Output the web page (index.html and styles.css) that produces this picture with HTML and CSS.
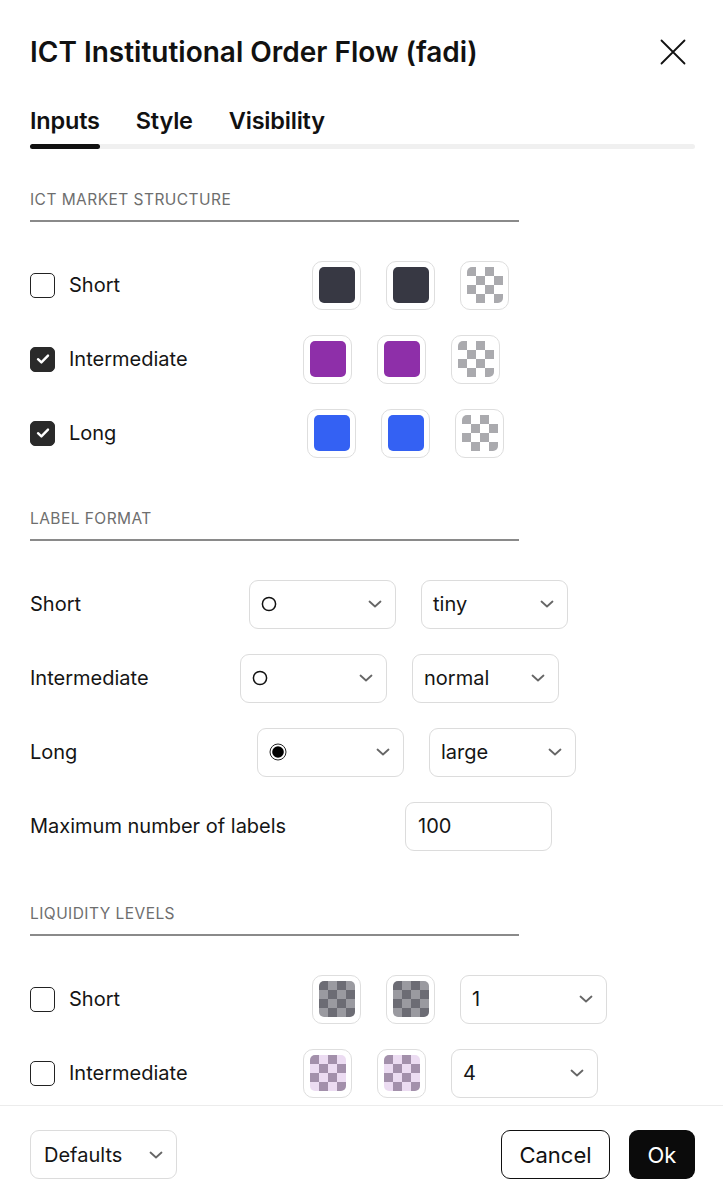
FILE: index.html
```html
<!DOCTYPE html>
<html lang="en">
<head>
<meta charset="utf-8">
<title>ICT Institutional Order Flow (fadi)</title>
<link rel="stylesheet" href="styles.css">
</head>
<body>
<div class="dialog">
  <div class="main">
    <header class="header">
      <h1 class="title">ICT Institutional Order Flow (fadi)</h1>
      <button class="close" aria-label="Close">
        <svg width="26" height="26" viewBox="0 0 26 26"><path d="M1.5 1.5 L24.5 24.5 M24.5 1.5 L1.5 24.5" stroke="#111" stroke-width="1.8" fill="none" stroke-linecap="round"/></svg>
      </button>
    </header>

    <nav class="tabs">
      <div class="tab-list">
        <span class="tab tab--active">Inputs</span>
        <span class="tab">Style</span>
        <span class="tab">Visibility</span>
      </div>
      <div class="tab-track"><div class="tab-indicator"></div></div>
    </nav>

    <div class="content">
      <section class="section">
        <h2 class="section-title">ICT MARKET STRUCTURE</h2>
        <div class="rows">
          <div class="row">
            <label class="lbl lbl-w282"><span class="check"></span>Short</label>
            <div class="controls">
              <span class="swatch"><span class="chip chip--dark"></span></span>
              <span class="swatch"><span class="chip chip--dark"></span></span>
              <span class="swatch"><span class="chip chip--clear"></span></span>
            </div>
          </div>
          <div class="row">
            <label class="lbl lbl-w273"><span class="check check--on"><svg width="14" height="12" viewBox="0 0 14 12"><path d="M2 6.2 L5.4 9.4 L12 2.6" stroke="#fff" stroke-width="2.4" fill="none" stroke-linecap="round" stroke-linejoin="round"/></svg></span>Intermediate</label>
            <div class="controls">
              <span class="swatch"><span class="chip chip--purple"></span></span>
              <span class="swatch"><span class="chip chip--purple"></span></span>
              <span class="swatch"><span class="chip chip--clear"></span></span>
            </div>
          </div>
          <div class="row">
            <label class="lbl lbl-w277"><span class="check check--on"><svg width="14" height="12" viewBox="0 0 14 12"><path d="M2 6.2 L5.4 9.4 L12 2.6" stroke="#fff" stroke-width="2.4" fill="none" stroke-linecap="round" stroke-linejoin="round"/></svg></span>Long</label>
            <div class="controls">
              <span class="swatch"><span class="chip chip--blue"></span></span>
              <span class="swatch"><span class="chip chip--blue"></span></span>
              <span class="swatch"><span class="chip chip--clear"></span></span>
            </div>
          </div>
        </div>
      </section>

      <section class="section section--gap">
        <h2 class="section-title">LABEL FORMAT</h2>
        <div class="rows">
          <div class="row">
            <span class="lbl lbl-w219">Short</span>
            <div class="controls">
              <span class="select"><span class="select-val"><svg width="16" height="16" viewBox="0 0 16 16"><circle cx="8" cy="8" r="6.6" stroke="#111" stroke-width="1.5" fill="none"/></svg></span><svg class="chev" width="14" height="8" viewBox="0 0 14 8"><path d="M1.5 1.5 L7 6.5 L12.5 1.5" stroke="#666" stroke-width="1.8" fill="none" stroke-linecap="round" stroke-linejoin="round"/></svg></span>
              <span class="select"><span class="select-val">tiny</span><svg class="chev" width="14" height="8" viewBox="0 0 14 8"><path d="M1.5 1.5 L7 6.5 L12.5 1.5" stroke="#666" stroke-width="1.8" fill="none" stroke-linecap="round" stroke-linejoin="round"/></svg></span>
            </div>
          </div>
          <div class="row">
            <span class="lbl lbl-w210">Intermediate</span>
            <div class="controls">
              <span class="select"><span class="select-val"><svg width="16" height="16" viewBox="0 0 16 16"><circle cx="8" cy="8" r="6.6" stroke="#111" stroke-width="1.5" fill="none"/></svg></span><svg class="chev" width="14" height="8" viewBox="0 0 14 8"><path d="M1.5 1.5 L7 6.5 L12.5 1.5" stroke="#666" stroke-width="1.8" fill="none" stroke-linecap="round" stroke-linejoin="round"/></svg></span>
              <span class="select"><span class="select-val">normal</span><svg class="chev" width="14" height="8" viewBox="0 0 14 8"><path d="M1.5 1.5 L7 6.5 L12.5 1.5" stroke="#666" stroke-width="1.8" fill="none" stroke-linecap="round" stroke-linejoin="round"/></svg></span>
            </div>
          </div>
          <div class="row">
            <span class="lbl lbl-w227">Long</span>
            <div class="controls">
              <span class="select"><span class="select-val"><svg width="18" height="18" viewBox="0 0 18 18"><circle cx="9" cy="9" r="8" stroke="#222" stroke-width="1" fill="#fff"/><circle cx="9" cy="9" r="5.8" fill="#000"/></svg></span><svg class="chev" width="14" height="8" viewBox="0 0 14 8"><path d="M1.5 1.5 L7 6.5 L12.5 1.5" stroke="#666" stroke-width="1.8" fill="none" stroke-linecap="round" stroke-linejoin="round"/></svg></span>
              <span class="select"><span class="select-val">large</span><svg class="chev" width="14" height="8" viewBox="0 0 14 8"><path d="M1.5 1.5 L7 6.5 L12.5 1.5" stroke="#666" stroke-width="1.8" fill="none" stroke-linecap="round" stroke-linejoin="round"/></svg></span>
            </div>
          </div>
          <div class="row">
            <span class="lbl lbl-w375">Maximum number of labels</span>
            <div class="controls">
              <span class="input">100</span>
            </div>
          </div>
        </div>
      </section>

      <section class="section section--gap-lg">
        <h2 class="section-title">LIQUIDITY LEVELS</h2>
        <div class="rows">
          <div class="row">
            <label class="lbl lbl-w282"><span class="check"></span>Short</label>
            <div class="controls">
              <span class="swatch"><span class="chip chip--grey"></span></span>
              <span class="swatch"><span class="chip chip--grey"></span></span>
              <span class="select"><span class="select-val">1</span><svg class="chev" width="14" height="8" viewBox="0 0 14 8"><path d="M1.5 1.5 L7 6.5 L12.5 1.5" stroke="#666" stroke-width="1.8" fill="none" stroke-linecap="round" stroke-linejoin="round"/></svg></span>
            </div>
          </div>
          <div class="row">
            <label class="lbl lbl-w273"><span class="check"></span>Intermediate</label>
            <div class="controls">
              <span class="swatch"><span class="chip chip--lilac"></span></span>
              <span class="swatch"><span class="chip chip--lilac"></span></span>
              <span class="select"><span class="select-val">4</span><svg class="chev" width="14" height="8" viewBox="0 0 14 8"><path d="M1.5 1.5 L7 6.5 L12.5 1.5" stroke="#666" stroke-width="1.8" fill="none" stroke-linecap="round" stroke-linejoin="round"/></svg></span>
            </div>
          </div>
        </div>
      </section>
    </div>
  </div>

  <footer class="footer">
    <span class="select select--defaults"><span class="select-val">Defaults</span><svg class="chev" width="14" height="8" viewBox="0 0 14 8"><path d="M1.5 1.5 L7 6.5 L12.5 1.5" stroke="#666" stroke-width="1.8" fill="none" stroke-linecap="round" stroke-linejoin="round"/></svg></span>
    <div class="actions">
      <button class="btn btn--outline">Cancel</button>
      <button class="btn btn--primary">Ok</button>
    </div>
  </footer>
</div>
</body>
</html>
```

FILE: styles.css
```css
* { box-sizing: border-box; }

html, body {
  margin: 0;
  padding: 0;
  background: #fff;
}

body {
  font-family: "Inter", "Noto Sans", sans-serif;
  color: #131313;
}

.dialog {
  width: 723px;
  height: 1200px;
  display: flex;
  flex-direction: column;
  background: #fff;
}

.main {
  flex: 1;
  min-height: 0;
  overflow: hidden;
  padding: 0 28px 0 30px;
}

.header {
  display: flex;
  align-items: center;
  justify-content: space-between;
  height: 44px;
  margin-top: 30px;
}

.title {
  margin: 0;
  font-size: 28px;
  font-weight: 600;
  letter-spacing: 0;
  line-height: 44px;
  color: #111;
}

.close {
  border: 0;
  background: none;
  padding: 0;
  width: 26px;
  height: 26px;
  margin-right: 9px;
  display: flex;
}

.tabs {
  margin-top: 33px;
}

.tab-list {
  display: flex;
  gap: 36px;
  height: 28px;
  align-items: center;
}

.tab {
  font-size: 23.5px;
  font-weight: 600;
  line-height: 28px;
  color: #111;
  letter-spacing: -0.2px;
}

.tab-track {
  margin-top: 9px;
  height: 5px;
  border-radius: 3px;
  background: #f0f0f0;
}

.tab-indicator {
  width: 70px;
  height: 5px;
  border-radius: 3px;
  background: #111;
}

.content {
  padding-top: 41px;
}

.section--gap {
  margin-top: 51px;
}

.section--gap-lg {
  margin-top: 53px;
}

.section-title {
  margin: 0;
  width: 489px;
  font-size: 15.5px;
  font-weight: 400;
  line-height: 20px;
  letter-spacing: 0.45px;
  color: #6e6e6e;
  padding-bottom: 10px;
  border-bottom: 2px solid #8a8a8a;
}

.rows {
  margin-top: 38px;
  display: flex;
  flex-direction: column;
  gap: 24px;
}

.row {
  display: flex;
  align-items: center;
  height: 50px;
}

.lbl {
  display: flex;
  align-items: center;
  gap: 14px;
  font-size: 20px;
  line-height: 24px;
  color: #151515;
  flex-shrink: 0;
}

.lbl-w282 { width: 282px; }
.lbl-w273 { width: 273px; }
.lbl-w277 { width: 277px; }
.lbl-w219 { width: 219px; }
.lbl-w210 { width: 210px; }
.lbl-w227 { width: 227px; }
.lbl-w375 { width: 375px; }

.check {
  width: 25px;
  height: 25px;
  border: 1.5px solid #222;
  border-radius: 5px;
  display: flex;
  align-items: center;
  justify-content: center;
  flex-shrink: 0;
  background: #fff;
}

.check--on {
  background: #2a2a2a;
  border-color: #2a2a2a;
}

.controls {
  display: flex;
  align-items: center;
  gap: 25px;
}

.swatch {
  width: 49px;
  height: 49px;
  border: 1.5px solid #dedede;
  border-radius: 10px;
  padding: 5.5px;
  background: #fff;
  display: block;
}

.chip {
  display: block;
  width: 100%;
  height: 100%;
  border-radius: 5px;
}

.chip--dark { background: #373843; }
.chip--purple { background: #8e2fa9; }
.chip--blue { background: #3461f3; }

.chip--clear {
  background-color: #fff;
  background-image: conic-gradient(#aaaaae 0 25%, transparent 0 50%, #aaaaae 0 75%, transparent 0);
  background-size: 18px 18px;
  background-position: 9px 0;
}

.chip--grey {
  background-color: #9a9aa0;
  background-image: conic-gradient(#6c6c74 0 25%, transparent 0 50%, #6c6c74 0 75%, transparent 0);
  background-size: 18px 18px;
  background-position: 9px 0;
}

.chip--lilac {
  background-color: #ecdcf2;
  background-image: conic-gradient(#a390ab 0 25%, transparent 0 50%, #a390ab 0 75%, transparent 0);
  background-size: 18px 18px;
  background-position: 9px 0;
}

.select {
  width: 147px;
  height: 49px;
  border: 1.5px solid #dcdcdc;
  border-radius: 9px;
  display: flex;
  align-items: center;
  justify-content: space-between;
  padding: 0 13px 0 11px;
  font-size: 20px;
  color: #151515;
  background: #fff;
}

.select-val {
  display: flex;
  align-items: center;
}

.chev {
  display: block;
}

.input {
  width: 147px;
  height: 49px;
  border: 1.5px solid #dcdcdc;
  border-radius: 9px;
  display: flex;
  align-items: center;
  padding: 0 12px;
  font-size: 20px;
  color: #151515;
}

.footer {
  flex-shrink: 0;
  height: 95px;
  border-top: 1px solid #ececec;
  padding: 24px 28px 0 30px;
  display: flex;
  justify-content: space-between;
  align-items: flex-start;
  background: #fff;
}

.select--defaults {
  padding-left: 13px;
}

.actions {
  display: flex;
  gap: 19px;
}

.btn {
  height: 49px;
  border-radius: 9px;
  font-family: "Inter", "Noto Sans", sans-serif;
  font-size: 22px;
  padding: 0;
  cursor: pointer;
}

.btn--outline {
  width: 109px;
  border: 1.5px solid #111;
  background: #fff;
  color: #111;
}

.btn--primary {
  width: 66px;
  border: 0;
  background: #0b0b0b;
  color: #fff;
}
```
